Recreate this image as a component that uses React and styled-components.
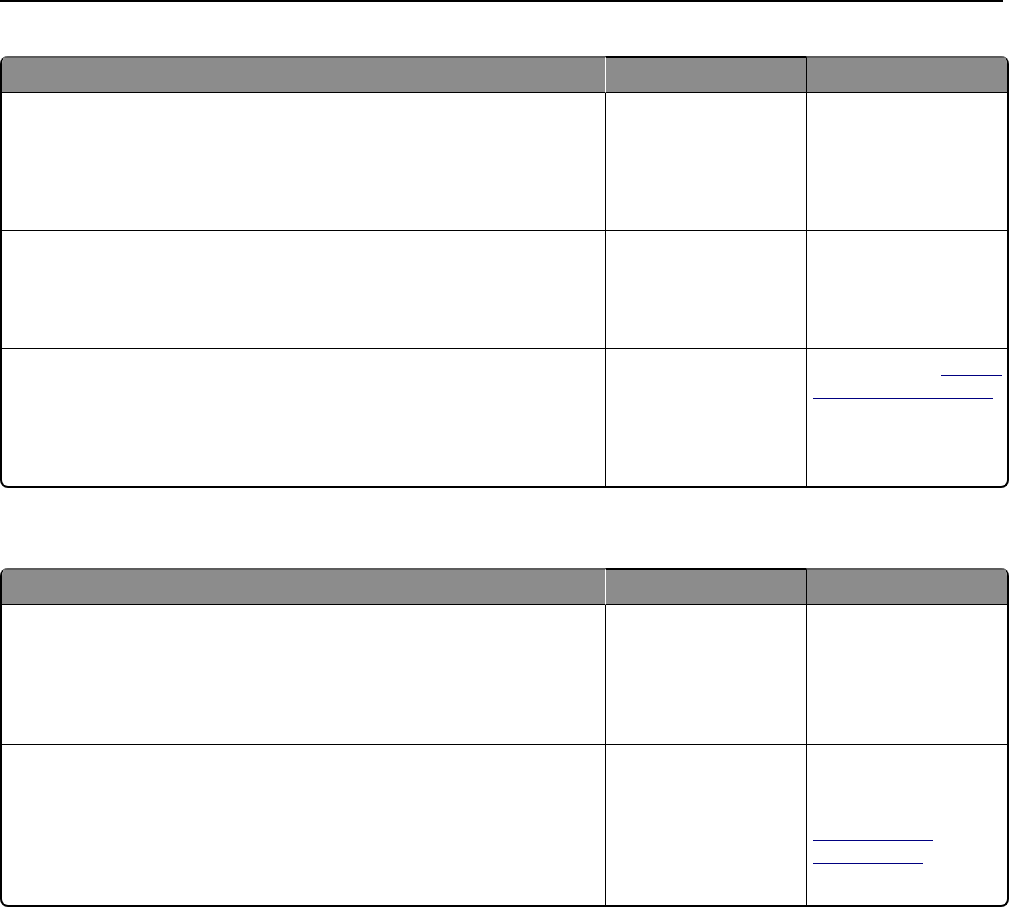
import React from 'react'
import styled, { createGlobalStyle } from 'styled-components'

const GlobalStyle = createGlobalStyle`
  html, body {
    margin: 0;
    padding: 0;
    background: #fff;
    font-family: "Liberation Sans", Arial, sans-serif;
  }
  * { box-sizing: border-box; }
`

const Page = styled.div`
  width: 1010px;
  height: 909px;
  overflow: hidden;
  background: #fff;
`

const TopRule = styled.div`
  width: 1003px;
  height: 2px;
  background: #000;
  margin-bottom: 54px;
`

const Table = styled.div`
  width: 1009px;
  display: grid;
  grid-template-columns: 603px 201px 1fr;
  border: 2px solid #000;
  border-top: none;
  border-radius: 8px;
  overflow: hidden;
  margin-bottom: ${p => p.$gap || 0}px;
`

const HeadCell = styled.div`
  height: 37px;
  background: #8c8c8c;
  border-top: 2px solid ${p => (p.$dark ? '#000' : '#5c5c5c')};
  border-bottom: 1px solid #000;
  border-left: ${p => (p.$first ? 'none' : `1px solid ${p.$light ? '#fff' : '#000'}`)};
`

const Cell = styled.div`
  height: ${p => p.$h}px;
  padding: 6px 6px 0 6px;
  border-left: ${p => (p.$first ? 'none' : '1px solid #000')};
  border-bottom: ${p => (p.$last ? 'none' : '1px solid #000')};
`

const Line = styled.div`
  height: 23px;
`

const LinkRule = styled.a`
  display: block;
  height: 21px;
  margin-left: ${p => p.$offset || 0}px;
  width: ${p => p.$w}px;
  border-bottom: 1px solid #000080;
  color: #000080;
  text-decoration: none;
`

const tables = [
  {
    gap: 80,
    rows: [
      { h: 138, links: [] },
      { h: 118, links: [] },
      { h: 137, links: [{ line: 0, offset: 128, w: 61 }, { line: 1, offset: 0, w: 180 }] },
    ],
  },
  {
    gap: 0,
    rows: [
      { h: 140, links: [] },
      { h: 160, links: [{ line: 3, offset: 0, w: 120 }, { line: 4, offset: 0, w: 110 }] },
    ],
  },
]

const LinkCell = ({ links }) => {
  const count = links.length ? Math.max(...links.map(l => l.line)) + 1 : 0
  return Array.from({ length: count }, (_, i) => {
    const link = links.find(l => l.line === i)
    return (
      <Line key={i}>
        {link && <LinkRule href="#" $offset={link.offset} $w={link.w} />}
      </Line>
    )
  })
}

export default function App() {
  return (
    <Page>
      <GlobalStyle />
      <TopRule />
      {tables.map((t, ti) => (
        <Table key={ti} $gap={t.gap}>
          <HeadCell $first />
          <HeadCell $dark $light />
          <HeadCell />
          {t.rows.map((r, ri) => {
            const last = ri === t.rows.length - 1
            return (
              <React.Fragment key={ri}>
                <Cell $first $h={r.h} $last={last} />
                <Cell $h={r.h} $last={last} />
                <Cell $h={r.h} $last={last}>
                  <LinkCell links={r.links} />
                </Cell>
              </React.Fragment>
            )
          })}
        </Table>
      ))}
    </Page>
  )
}
